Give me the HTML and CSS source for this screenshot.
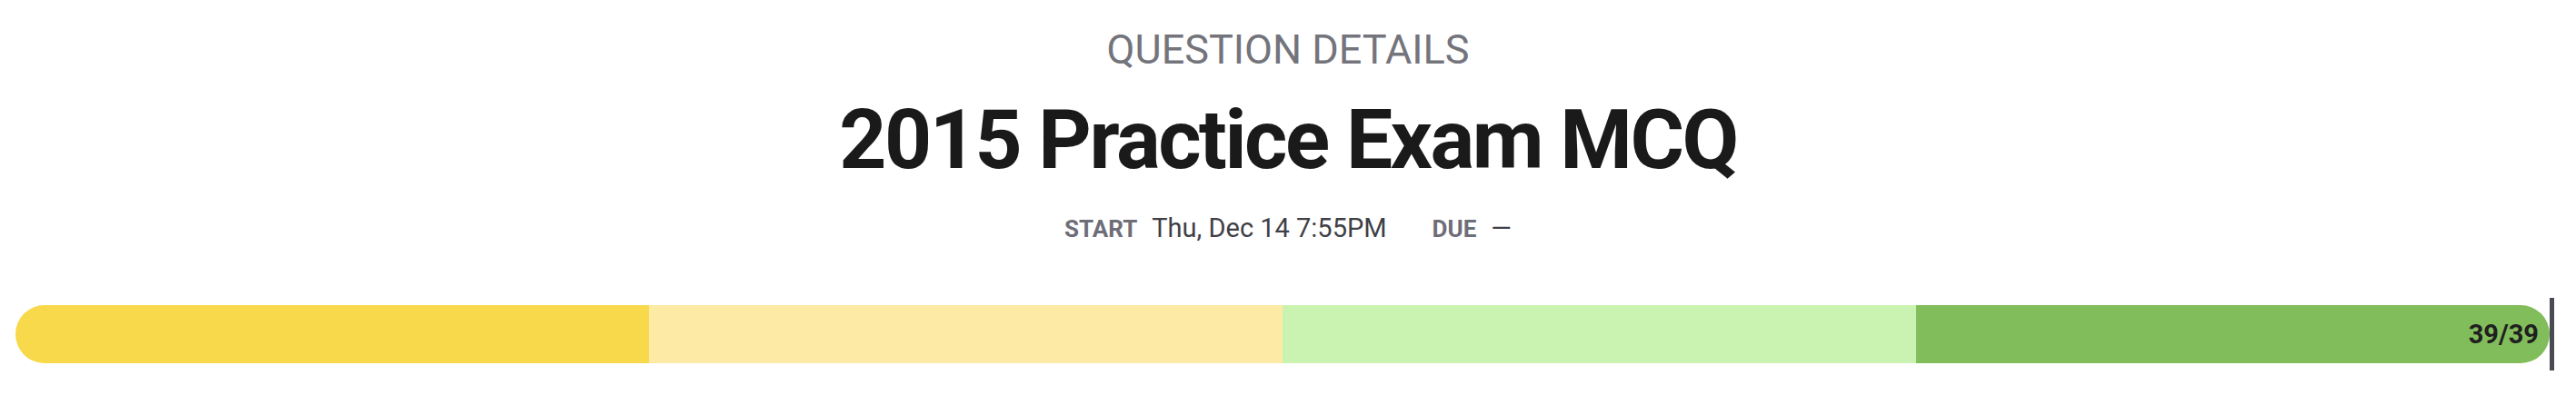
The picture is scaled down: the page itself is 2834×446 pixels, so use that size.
FILE: index.html
```html
<!DOCTYPE html>
<html>
<head>
<meta charset="utf-8">
<link rel="stylesheet" href="styles.css">
</head>
<body>
<div class="page">
  <header class="header">
    <div class="eyebrow">QUESTION DETAILS</div>
    <h1 class="title">2015 Practice Exam MCQ</h1>
    <div class="meta">
      <span class="meta-label">START</span>
      <span class="meta-value">Thu, Dec 14 7:55PM</span>
      <span class="meta-label due">DUE</span>
      <span class="meta-value">—</span>
    </div>
  </header>
  <div class="progress-wrap">
    <div class="progress">
      <div class="seg seg-1"></div>
      <div class="seg seg-2"></div>
      <div class="seg seg-3"></div>
      <div class="seg seg-4"><span class="count">39/39</span></div>
      <div class="marker"></div>
    </div>
  </div>
</div>
</body>
</html>
```

FILE: styles.css
```css
html, body {
  margin: 0;
  padding: 0;
  background: #ffffff;
}

body {
  font-family: Roboto, "Liberation Sans", sans-serif;
}

.page {
  width: 2834px;
  height: 446px;
}

.header {
  display: flex;
  flex-direction: column;
  align-items: center;
}

.eyebrow {
  margin-top: 27px;
  font-size: 45px;
  line-height: 56px;
  color: #74747c;
}

.title {
  margin: 25px 0 0 0;
  font-size: 91px;
  line-height: 92px;
  font-weight: 700;
  letter-spacing: -0.027em;
  color: #1a1a1a;
}

.meta {
  margin-top: 31px;
  display: flex;
  align-items: baseline;
  line-height: 40px;
}

.meta-label {
  font-size: 26px;
  font-weight: 700;
  color: #6e6e78;
  margin-right: 16px;
}

.meta-label.due {
  margin-left: 50px;
}

.meta-value {
  font-size: 29px;
  color: #3f3f46;
}

.progress-wrap {
  padding: 0 29px 0 17px;
  margin-top: 64px;
}

.progress {
  position: relative;
  display: flex;
  height: 64px;
}

.seg {
  flex: 1;
  display: flex;
  align-items: center;
  justify-content: flex-end;
}

.seg-1 {
  background: #f8d94b;
  border-radius: 32px 0 0 32px;
}

.seg-2 {
  background: #fceaa5;
}

.seg-3 {
  background: #caf3b2;
}

.seg-4 {
  background: #82bd5c;
  border-radius: 0 32px 32px 0;
}

.count {
  font-size: 29px;
  font-weight: 700;
  color: #1f1f1f;
  margin-right: 12px;
}

.marker {
  position: absolute;
  left: 100%;
  top: -8px;
  bottom: -8px;
  width: 5px;
  background: #4a4a52;
}
```
